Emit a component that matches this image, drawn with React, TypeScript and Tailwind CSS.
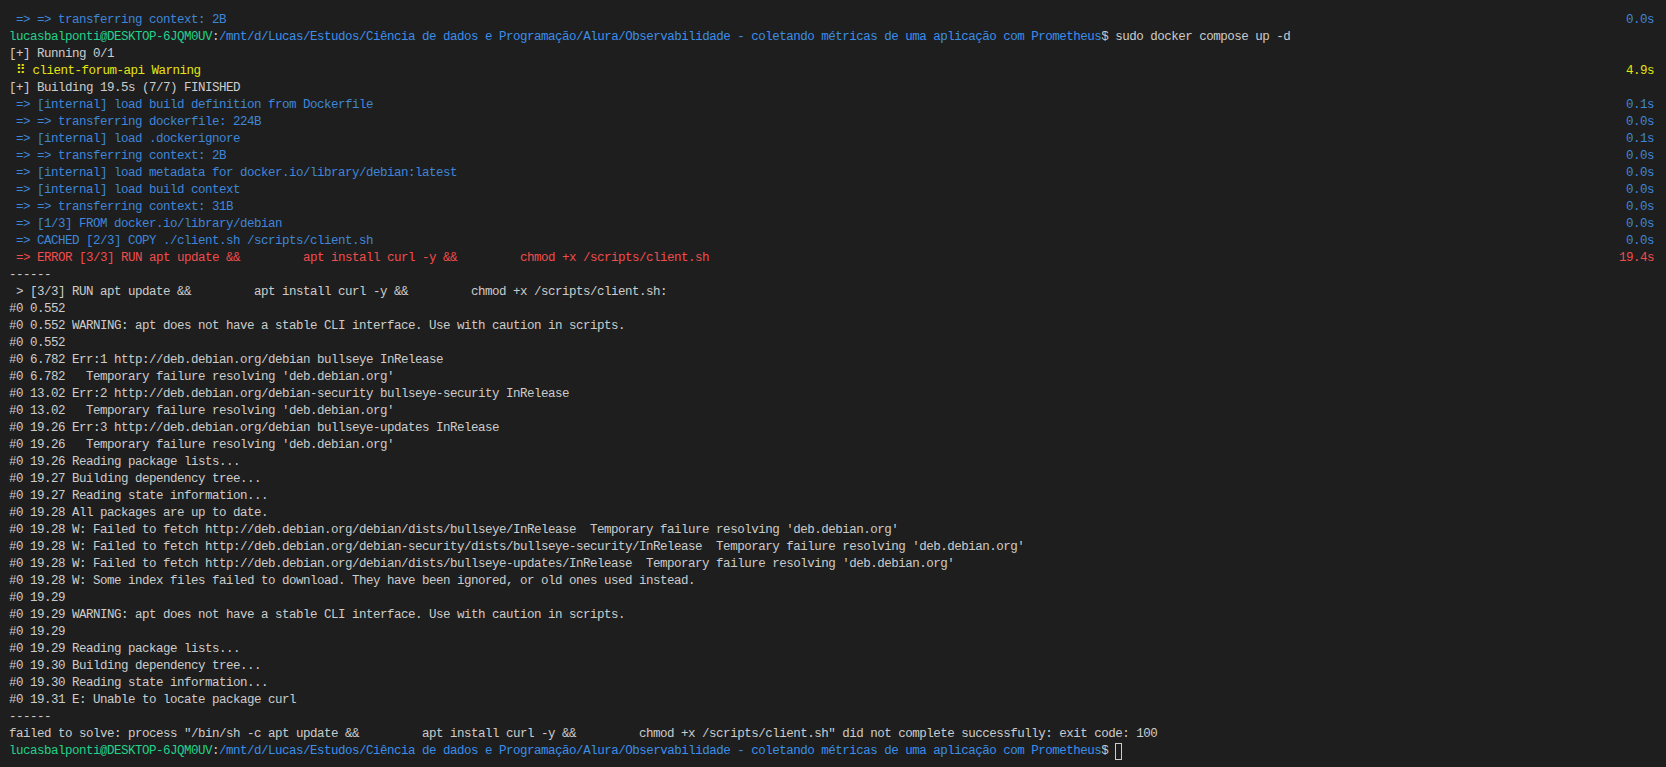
type Seg = { t: string; c?: string };
type Line = { segs: Seg[]; time?: Seg };

const BLUE = "text-[#3f86d8]";
const PATH = "text-[#3b8eea]";
const GREEN = "text-[#23d18b]";
const YELLOW = "text-[#e5e510]";
const RED = "text-[#f14c4c]";

const GAP = "         ";
const CWD =
  "/mnt/d/Lucas/Estudos/Ciência de dados e Programação/Alura/Observabilidade - coletando métricas de uma aplicação com Prometheus";

const blue = (t: string, time = "0.0s"): Line => ({
  segs: [{ t, c: BLUE }],
  time: { t: time, c: BLUE },
});
const plain = (t: string): Line => ({ segs: [{ t }] });
const prompt = (rest: string): Line => ({
  segs: [
    { t: "lucasbalponti@DESKTOP-6JQM0UV", c: GREEN },
    { t: ":" },
    { t: CWD, c: PATH },
    { t: "$" + rest },
  ],
});

const lines: Line[] = [
  blue(" => => transferring context: 2B"),
  prompt(" sudo docker compose up -d"),
  plain("[+] Running 0/1"),
  {
    segs: [{ t: " ⠿ client-forum-api Warning", c: YELLOW }],
    time: { t: "4.9s", c: YELLOW },
  },
  plain("[+] Building 19.5s (7/7) FINISHED"),
  blue(" => [internal] load build definition from Dockerfile", "0.1s"),
  blue(" => => transferring dockerfile: 224B"),
  blue(" => [internal] load .dockerignore", "0.1s"),
  blue(" => => transferring context: 2B"),
  blue(" => [internal] load metadata for docker.io/library/debian:latest"),
  blue(" => [internal] load build context"),
  blue(" => => transferring context: 31B"),
  blue(" => [1/3] FROM docker.io/library/debian"),
  blue(" => CACHED [2/3] COPY ./client.sh /scripts/client.sh"),
  {
    segs: [
      {
        t: ` => ERROR [3/3] RUN apt update &&${GAP}apt install curl -y &&${GAP}chmod +x /scripts/client.sh`,
        c: RED,
      },
    ],
    time: { t: "19.4s", c: RED },
  },
  plain("------"),
  plain(` > [3/3] RUN apt update &&${GAP}apt install curl -y &&${GAP}chmod +x /scripts/client.sh:`),
  plain("#0 0.552"),
  plain("#0 0.552 WARNING: apt does not have a stable CLI interface. Use with caution in scripts."),
  plain("#0 0.552"),
  plain("#0 6.782 Err:1 http://deb.debian.org/debian bullseye InRelease"),
  plain("#0 6.782   Temporary failure resolving 'deb.debian.org'"),
  plain("#0 13.02 Err:2 http://deb.debian.org/debian-security bullseye-security InRelease"),
  plain("#0 13.02   Temporary failure resolving 'deb.debian.org'"),
  plain("#0 19.26 Err:3 http://deb.debian.org/debian bullseye-updates InRelease"),
  plain("#0 19.26   Temporary failure resolving 'deb.debian.org'"),
  plain("#0 19.26 Reading package lists..."),
  plain("#0 19.27 Building dependency tree..."),
  plain("#0 19.27 Reading state information..."),
  plain("#0 19.28 All packages are up to date."),
  plain(
    "#0 19.28 W: Failed to fetch http://deb.debian.org/debian/dists/bullseye/InRelease  Temporary failure resolving 'deb.debian.org'"
  ),
  plain(
    "#0 19.28 W: Failed to fetch http://deb.debian.org/debian-security/dists/bullseye-security/InRelease  Temporary failure resolving 'deb.debian.org'"
  ),
  plain(
    "#0 19.28 W: Failed to fetch http://deb.debian.org/debian/dists/bullseye-updates/InRelease  Temporary failure resolving 'deb.debian.org'"
  ),
  plain("#0 19.28 W: Some index files failed to download. They have been ignored, or old ones used instead."),
  plain("#0 19.29"),
  plain("#0 19.29 WARNING: apt does not have a stable CLI interface. Use with caution in scripts."),
  plain("#0 19.29"),
  plain("#0 19.29 Reading package lists..."),
  plain("#0 19.30 Building dependency tree..."),
  plain("#0 19.30 Reading state information..."),
  plain("#0 19.31 E: Unable to locate package curl"),
  plain("------"),
  plain(
    `failed to solve: process "/bin/sh -c apt update &&${GAP}apt install curl -y &&${GAP}chmod +x /scripts/client.sh" did not complete successfully: exit code: 100`
  ),
  prompt(" "),
];

export default function App() {
  return (
    <div className="h-[767px] w-full overflow-hidden bg-[#1e1e1e] pt-[12px] pl-[9px] pr-[12px] font-['Liberation_Mono','DejaVu_Sans_Mono',monospace] text-[12.5px] tracking-[-0.5px] text-[#cccccc]">
      {lines.map((line, i) => (
        <div key={i} className="flex h-[17px] items-center justify-between leading-[17px] whitespace-pre">
          <div className="flex items-center">
            {line.segs.map((s, j) => (
              <span key={j} className={s.c}>
                {s.t}
              </span>
            ))}
            {i === lines.length - 1 && (
              <span className="inline-block h-[17px] w-[7px] border border-[#cccccc]" />
            )}
          </div>
          {line.time && <span className={line.time.c}>{line.time.t}</span>}
        </div>
      ))}
    </div>
  );
}
